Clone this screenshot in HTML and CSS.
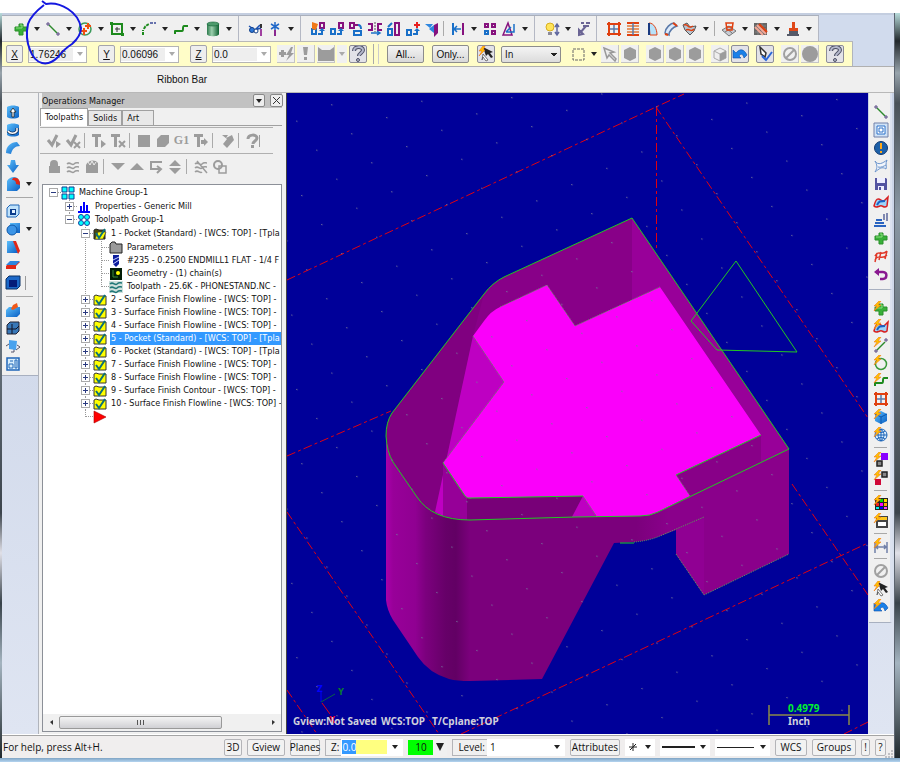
FILE: index.html
```
<!DOCTYPE html>
<html lang="en">
  <head>
    <meta charset="UTF-8" />
    <meta name="viewport" content="width=device-width, initial-scale=1.0" />
    <title>Operations Manager</title>
    <link rel="stylesheet" href="styles.css">
  </head>
  <body>
    <!-- Shared icons -->
    <svg class="sprite" aria-hidden="true">
      <defs>
        <linearGradient id="gBlue" x1="0" y1="0" x2="1" y2="1">
          <stop offset="0" stop-color="#5cc0fc" />
          <stop offset="1" stop-color="#0a5fc4" />
        </linearGradient>
        <linearGradient id="gGreen" x1="0" y1="0" x2="1" y2="0">
          <stop offset="0" stop-color="#2c7a4c" />
          <stop offset="0.4" stop-color="#9ccfae" />
          <stop offset="1" stop-color="#0c6030" />
        </linearGradient>
      </defs>
      <symbol id="plus" viewBox="0 0 16 16">
        <path d="M6 3h4v3h4v4h-4v4H6v-4H2V6h4z" fill="#38b038" stroke="#2a8f2a" />
        <path d="M7 4h2v3H3" fill="none" stroke="#8be07c" />
      </symbol>
      <symbol id="line" viewBox="0 0 16 16">
        <path d="M4 4l8 8" stroke="#2d8a2d" stroke-width="1.5" />
        <path d="M1 3h4M3 1v4M11 13h4M13 11v4" stroke="#5a4a86" />
      </symbol>
      <symbol id="bolt" viewBox="0 0 16 16">
        <path d="M6 0L1 5h3L1 10l7-6H5l3-4z" fill="#ffc400" stroke="#f07818" stroke-width=".6" />
      </symbol>
      <symbol id="spline" viewBox="0 0 16 16">
        <path d="M2 13v-3h7c2 0 0-5 2-5h4" fill="none" stroke="#1d8a1d" stroke-width="2" stroke-linejoin="round" />
      </symbol>
      <symbol id="surface" viewBox="0 0 16 16">
        <path d="M1 12c2-8 4-8 7-6s4 0 7-3l-1 9c-3 3-4-1-7 0s-4 2-6 0z" fill="#9fd4f8" stroke="#d82020" stroke-width="1.5" />
        <path d="M4 11c2-4 3-4 8-4" fill="none" stroke="#1764c8" stroke-width="2" />
      </symbol>
      <symbol id="net" viewBox="0 0 16 16">
        <path d="M3 1v14M13 1v14M1 3h14M1 13h14" fill="none" stroke="#e04010" stroke-width="2" />
        <path d="M8 4v8M4 8h8" stroke="#5878a8" stroke-width="1.5" />
      </symbol>
      <symbol id="undo" viewBox="0 0 16 16">
        <path d="M1 12V4l3 3c4-5 8-4 11 2l-3 3c-1-4-3-5-5-2l2 2z" fill="#1a80e8" stroke="#0b4fa8" stroke-width=".6" />
      </symbol>
      <symbol id="hex" viewBox="0 0 16 16">
        <path d="M8 1l6 3v8l-6 3-6-3V4z" fill="#9c9c9c" />
      </symbol>
      <symbol id="ban" viewBox="0 0 16 16">
        <circle cx="8" cy="8" r="6" fill="none" stroke="#a0a0a0" stroke-width="2" />
        <path d="M4 12l8-8" stroke="#a0a0a0" stroke-width="2" />
      </symbol>
      <symbol id="help" viewBox="0 0 16 16">
        <path d="M4 5c0-5 9-5 9-1 0 3-4 3-4 6" fill="none" stroke="#4d5064" stroke-width="4" />
        <path d="M4 5c0-5 9-5 9-1 0 3-4 3-4 6" fill="none" stroke="#b4b8cc" stroke-width="2" />
        <circle cx="8" cy="14" r="1.5" fill="#b4b8cc" stroke="#4d5064" />
      </symbol>
      <symbol id="pick" viewBox="0 0 16 16">
        <path d="M5 1l10 5-3 1 3 4-2 1-3-4-2 2z" fill="#222" />
        <path d="M5 8l5 6-2 1-3-4-1 3z" fill="#fff" stroke="#555" stroke-width=".8" />
        <path d="M5 0L1 5h3L1 10l6-6H5l2-4z" fill="#ffc400" stroke="#f07818" stroke-width=".6" />
      </symbol>
      <symbol id="copyboxes" viewBox="0 0 16 16">
        <path d="M10 2h4v5h-4z" fill="none" stroke="#86127e" stroke-width="2" />
        <path d="M2 8h4v5H2z" fill="none" stroke="#1a70c8" stroke-width="2" />
        <path d="M8 13h4v-3" fill="none" stroke="#1a70c8" stroke-width="2" />
        <path d="M9 10l3-3 3 3z" fill="#1a70c8" />
      </symbol>
      <symbol id="folder" viewBox="0 0 14 14">
        <path d="M1 3l2-1 3 1h7v9H1z" fill="#ff0" stroke="#333" />
        <path d="M3 7l3 4 6-9" fill="none" stroke="#0c7078" stroke-width="2" />
      </symbol>
    </svg>

    <div class="frame">
      <div class="app">
        <header class="dock-top">
          <div class="toolbar main-tools">
            <div class="group">
              <button class="tool" aria-label="Create point"><svg class="icon"><use href="#plus" /></svg></button><button class="drop" aria-label="Point menu"></button>
              <button class="tool" aria-label="Create line"><svg class="icon"><use href="#line" /></svg></button><button class="drop" aria-label="Line menu"></button>
              <button class="tool" aria-label="Create arc"><svg class="icon"><circle cx="8" cy="8" r="6" fill="none" stroke="#3b9a5b" stroke-width="1.5" /><path d="M7 7v7M3 10h7M11 2v6M8 5h6" stroke="#f05010" stroke-width="2" /></svg></button><button class="drop" aria-label="Arc menu"></button>
              <button class="tool" aria-label="Rectangle"><svg class="icon"><path d="M3 3h10v10H3z" fill="none" stroke="#1d8a1d" stroke-width="2" /><path d="M6 8h5M8 6v5" stroke="#333" /><path d="M1 1h3v3H1zM12 12h3v3h-3z" fill="#1d8a1d" /></svg></button><button class="drop" aria-label="Rectangle menu"></button>
              <button class="tool" aria-label="Fillet"><svg class="icon"><path d="M2 14V9M3 8c1-3 3-4 5-5" fill="none" stroke="#1d8a1d" stroke-width="2" stroke-dasharray="3 1" /><path d="M9 2h6" stroke="#3a4896" stroke-width="1.5" stroke-dasharray="3 1" /></svg></button><button class="drop" aria-label="Fillet menu"></button>
              <button class="tool" aria-label="Spline"><svg class="icon"><use href="#spline" /></svg></button><button class="drop" aria-label="Spline menu"></button>
              <button class="tool" aria-label="Cylinder"><svg class="icon"><path d="M2 3v10c0 3 12 3 12 0V3z" fill="url(#gGreen)" /><ellipse cx="8" cy="3" rx="6" ry="2" fill="#4d9a6c" stroke="#0c6030" stroke-width=".6" /></svg></button><button class="drop" aria-label="Primitives menu"></button>
            </div>
            <div class="group">
              <button class="tool" aria-label="Trim"><svg class="icon"><path d="M1 5l6 4 5-5M7 9l6-2" fill="none" stroke="#1a50b0" stroke-width="1.5" /><circle cx="4" cy="9" r="2.5" fill="#2d78d8" stroke="#123f88" /><circle cx="8" cy="10" r="2" fill="#fff" stroke="#123f88" /><path d="M13 3v4" stroke="#333" stroke-width="2" /><path d="M13 8v7" stroke="#a040a0" stroke-width="2" /></svg></button>
              <button class="tool" aria-label="Break"><svg class="icon"><path d="M8 1v8M4 3l8 5M12 3L4 8" stroke="#2068c8" stroke-width="1.5" /><path d="M8 9v6" stroke="#8a2890" stroke-width="2" /></svg></button><button class="drop" aria-label="Trim menu"></button>
            </div>
            <div class="group">
              <button class="tool" aria-label="Dynamic transform"><svg class="icon"><use href="#copyboxes" /><path d="M2 1l6 2-2 6-4-1z" fill="#f07818" /></svg></button>
              <button class="tool" aria-label="Translate"><svg class="icon"><use href="#copyboxes" /></svg></button>
              <button class="tool" aria-label="Translate 3D"><svg class="icon"><path d="M2 2h4v5H2zM6 4h4" fill="none" stroke="#86127e" stroke-width="2" /><path d="M6 10h7v4H6zM10 4c3 0 3 2 3 4" fill="none" stroke="#1a70c8" stroke-width="2" /></svg></button>
              <button class="tool" aria-label="Offset"><svg class="icon"><path d="M1 3h4v6H1M15 3h-4v6h4" fill="none" stroke="#86127e" stroke-width="2" /><path d="M8 1v10" stroke="#555" stroke-dasharray="2 1" /><path d="M4 12h8M10 10l3 2-3 2" fill="none" stroke="#1a70c8" stroke-width="1.5" /></svg></button>
              <button class="tool" aria-label="Scale"><svg class="icon"><path d="M2 8h4v6H2zM2 6l4-4" fill="none" stroke="#1a70c8" stroke-width="2" /><path d="M9 2h4v12H9z" fill="none" stroke="#86127e" stroke-width="2" /></svg></button>
              <button class="tool" aria-label="Move to origin"><svg class="icon"><path d="M2 9h4v5H2zM8 13h4v-4" fill="none" stroke="#1a70c8" stroke-width="2" /><path d="M9 10l3-3 3 3z" fill="#1a70c8" /><path d="M12 1v6M9 4h6" stroke="#e82020" stroke-width="2" /></svg></button>
              <button class="tool" aria-label="Project"><svg class="icon"><path d="M1 3h8l-3 4zM5 8l5-4v8z" fill="#2d86e0" /><path d="M10 4l4-2v10l-4 4z" fill="#86127e" /></svg></button>
              <span class="sep"></span>
              <button class="tool" aria-label="Mirror"><svg class="icon"><path d="M3 2v12" stroke="#1a70c8" stroke-width="2" /><path d="M13 2v12" stroke="#86127e" stroke-width="2" /><path d="M4 8h7M7 5l-3 3 3 3" fill="none" stroke="#1a70c8" stroke-width="1.5" /></svg></button><button class="drop" aria-label="Mirror menu"></button>
              <button class="tool" aria-label="Array"><svg class="icon"><path d="M3 3h3v3H3zM10 3h3v3h-3zM10 10h3v3h-3z" fill="none" stroke="#86127e" stroke-width="2" /><path d="M3 10h3v3H3z" fill="none" stroke="#1a70c8" stroke-width="2" /></svg></button>
              <button class="tool" aria-label="Drag"><svg class="icon"><path d="M2 14L7 2l4 12z" fill="none" stroke="#86127e" stroke-width="1.5" /><path d="M5 11h8V3M5 11l5-5" fill="none" stroke="#1a70c8" stroke-width="1.5" /></svg></button><button class="drop" aria-label="Drag menu"></button>
            </div>
            <div class="group">
              <button class="tool" aria-label="Analyze"><svg class="icon"><circle cx="6" cy="6" r="4" fill="#ffe45a" stroke="#d8b020" /><path d="M4 11h4v3H4z" fill="#8a8a9a" /><path d="M13 4v9M11 6l2-3 2 3M11 11l2 3 2-3" fill="none" stroke="#6068a0" stroke-width="1.5" /></svg></button><button class="drop" aria-label="Analyze menu"></button>
              <button class="tool" aria-label="Dimension"><svg class="icon"><path d="M3 14V9l4 4zM4 12l6-7M7 5h6M5 2h3M10 2h4" fill="none" stroke="#6a6494" stroke-width="2" /></svg></button>
            </div>
            <div class="group">
              <button class="tool" aria-label="Net surface"><svg class="icon"><use href="#net" /></svg></button>
              <button class="tool" aria-label="Ruled surface"><svg class="icon"><path d="M2 2h12M2 14h12" stroke="#e04010" stroke-width="2" /><path d="M2 5h12M2 8h12M2 11h12" stroke="#e07838" stroke-width="1.5" /><path d="M8 2v12" stroke="#5878a8" stroke-width="1.5" /></svg></button>
              <button class="tool" aria-label="Revolved surface"><svg class="icon"><path d="M5 2c5 0 8 6 8 12H6z" fill="#b8e2fa" stroke="#e04010" /><path d="M5 2v12" stroke="#1a3a80" stroke-width="2" /></svg></button>
              <button class="tool" aria-label="Swept surface"><svg class="icon"><path d="M2 12c0-5 6-10 9-10l3 3c-4 1-8 5-8 9z" fill="#dceafa" stroke="#5878a8" stroke-width="1.5" /><path d="M2 13l3 1M10 2l4 3" stroke="#e04010" stroke-width="2" /></svg></button>
              <button class="tool" aria-label="Trim surface"><svg class="icon"><path d="M1 4l4-2 3 4 6-1-2 5-4 4-5-5z" fill="#b8c4d0" stroke="#555" /><path d="M2 4c5-2 3 5 9 1M4 9c4-2 5 3 8-1" fill="none" stroke="#e04010" stroke-width="1.5" /></svg></button><button class="drop" aria-label="Surface menu"></button>
              <span class="sep"></span>
              <button class="tool" aria-label="Curve on surface"><svg class="icon"><path d="M1 9l7-4 7 5-7 5z" fill="#c8ccd4" stroke="#777" /><path d="M4 11l7-4M5 7l6 5" stroke="#777" /><path d="M5 2h7l-1 7H6zM6 6h5" fill="none" stroke="#e04010" stroke-width="1.5" /></svg></button><button class="drop" aria-label="Curve menu"></button>
              <button class="tool" aria-label="Toolpath surface"><svg class="icon"><path d="M1 2h13v12H1z" fill="#666" /><path d="M2 5h11M2 8h11M2 11h11M5 2v12M9 2v12" stroke="#999" stroke-width=".6" /><path d="M4 4l9 9M2 6l8 8" stroke="#f4a898" stroke-width="2" /><path d="M6 3l8 8" stroke="#e04010" stroke-width="2" /></svg></button><button class="drop" aria-label="Toolpath menu"></button>
              <button class="tool" aria-label="Machine"><svg class="icon"><path d="M7 1h3v6h3v3H4V7h3z" fill="#e04818" /><path d="M4 10h9v3H4zM2 13h12v2H2z" fill="#555a68" /></svg></button><button class="drop" aria-label="Machine menu"></button>
            </div>
          </div>

          <div class="toolbar ribbon">
            <button class="axis"><u>X</u></button>
            <div class="combo"><input type="text" value="1.76246" aria-label="X" /><button class="drop off" aria-label="X history"></button></div>
            <button class="axis"><u>Y</u></button>
            <div class="combo"><input type="text" value="0.06096" aria-label="Y" /><button class="drop off" aria-label="Y history"></button></div>
            <button class="axis"><u>Z</u></button>
            <div class="combo"><input type="text" value="0.0" aria-label="Z" /><button class="drop off" aria-label="Z history"></button></div>
            <div class="ribbon-icons">
              <button class="tool flat" aria-label="Fast point"><svg class="icon"><path d="M1 6h7v3H1zM3 4h3v7H3zM13 1L8 9h3l-3 6 8-8h-3l2-6z" fill="#9c9c9c" /></svg></button>
              <button class="tool flat" aria-label="AutoCursor"><svg class="icon"><path d="M5 1h5L9 9H6zM6 11h3v3H6z" fill="#9c9c9c" /></svg></button>
              <button class="tool flat" aria-label="Override"><svg class="icon"><path d="M0 1l4 3h8l4-3v14H0z" fill="#9c9c9c" /></svg></button>
              <button class="drop off" aria-label="Override menu"></button>
              <button class="tool raised" aria-label="Cursor help"><svg class="icon"><use href="#help" /></svg></button>
            </div>
            <span class="divide"></span>
            <button class="push">All...</button>
            <button class="push">Only...</button>
            <button class="tool raised" aria-label="Quick pick"><svg class="icon"><use href="#pick" /></svg></button>
            <select class="pick-mode" aria-label="Selection mode"><option>In</option><option>Out</option></select>
            <div class="select-icons">
              <button class="tool" aria-label="Window"><svg class="icon"><path d="M3 3h11v11H3z" fill="none" stroke="#666" stroke-dasharray="3 1" /></svg></button><button class="drop" aria-label="Window menu"></button>
              <button class="tool flat" aria-label="Select"><svg class="icon"><path d="M2 2l10 4-4 1 6 6-1 2-6-6-2 3z" fill="#eee" stroke="#999" stroke-width="1.5" /></svg></button>
              <button class="tool flat" aria-label="Solid select"><svg class="icon"><use href="#hex" /></svg></button>
              <span class="space"></span>
              <button class="tool flat" aria-label="Body select"><svg class="icon"><use href="#hex" /></svg></button>
              <button class="tool flat" aria-label="Face select"><svg class="icon"><use href="#hex" /></svg></button>
              <button class="tool flat" aria-label="Edge select"><svg class="icon"><use href="#hex" /></svg></button>
              <span class="space"></span>
              <button class="tool flat" aria-label="From back"><svg class="icon"><path d="M2 5l6-3 6 3v7l-6 3-6-3zM8 8v7M2 5l6 3 6-3" fill="#eee" stroke="#aaa" /><path d="M8 8l6-3v7l-6 3z" fill="#9c9c9c" /></svg></button>
              <button class="tool raised" aria-label="Select last"><svg class="icon"><use href="#undo" /></svg></button>
              <span class="space"></span>
              <button class="tool raised" aria-label="Validate"><svg class="icon"><path d="M3 1l6 6-1 4-4-3z" fill="#fff" stroke="#333" stroke-width="1.5" /><path d="M5 10l4 4 6-8" fill="none" stroke="#2a68d8" stroke-width="2" /></svg></button>
              <span class="space"></span>
              <button class="tool flat" aria-label="Unselect"><svg class="icon"><use href="#ban" /></svg></button>
              <button class="tool flat" aria-label="End selection"><svg class="icon"><circle cx="8" cy="8" r="8" fill="#9c9c9c" /></svg></button>
              <span class="space"></span>
              <button class="tool raised" aria-label="Selection help"><svg class="icon"><use href="#help" /></svg></button>
            </div>
          </div>
          <div class="ribbon-bar">Ribbon Bar</div>
        </header>

        <main class="work">
          <nav class="dock dock-left">
            <div class="strip">
              <div class="cell"><button class="tool" aria-label="Extrude"><svg class="icon"><path d="M2 3c3-2 9-2 12 0v10c-3 2-9 2-12 0z" fill="url(#gBlue)" /><path d="M7 13V8H5l3-4 3 4H9v5z" fill="#fff" stroke="#222" stroke-width=".8" /></svg></button></div>
              <div class="cell"><button class="tool" aria-label="Revolve"><svg class="icon"><path d="M2 3c3-2 9-2 12 0v10c-3 2-9 2-12 0z" fill="url(#gBlue)" /><path d="M3 9c2 3 7 3 9 0V6" fill="none" stroke="#124" stroke-width="3" /><path d="M3 9c2 3 7 3 9 0V6" fill="none" stroke="#fff" stroke-width="1.5" /></svg></button></div>
              <div class="cell"><button class="tool" aria-label="Sweep"><svg class="icon"><path d="M1 13C1 6 6 2 12 2l3 4c-5 0-8 3-9 8z" fill="url(#gBlue)" /></svg></button></div>
              <div class="cell"><button class="tool" aria-label="Loft"><svg class="icon"><path d="M6 2h4l1 5h3l-6 8-6-8h3z" fill="url(#gBlue)" /></svg></button></div>
              <div class="cell"><button class="tool" aria-label="Solid fillet"><svg class="icon"><path d="M2 5c2-4 8-5 10-3l3 4v6l-3 3H2z" fill="url(#gBlue)" /><path d="M8 2c6-1 7 3 7 7l-4-1c0-3-1-4-4-4z" fill="#e02818" /></svg></button><button class="drop" aria-label="Solid fillet menu"></button></div>
              <hr />
              <div class="cell"><button class="tool" aria-label="Shell"><svg class="icon"><path d="M2 5l3-3h9v9l-3 3H2z" fill="#bfe2fb" stroke="#1f66b8" /><path d="M5 6h6v6H5z" fill="#0b3c8c" /><path d="M7 7h3v3H7z" fill="#e6f4ff" /></svg></button></div>
              <div class="cell"><button class="tool" aria-label="Boolean"><svg class="icon"><path d="M5 2h10v10H5z" fill="url(#gBlue)" /><circle cx="7" cy="9" r="5" fill="#3b94e6" stroke="#0b56a8" /></svg></button><button class="drop" aria-label="Boolean menu"></button></div>
              <div class="cell"><button class="tool" aria-label="Draft"><svg class="icon"><path d="M2 2h7l4 12H2z" fill="url(#gBlue)" /><path d="M8 2h3l4 10-2 3z" fill="#e02818" /></svg></button></div>
              <div class="cell"><button class="tool" aria-label="Trim solid"><svg class="icon"><path d="M1 9l4-4h10l-4 4v3H1z" fill="#e02818" /><path d="M1 8l4-4h10l-4 4z" fill="#2d86e0" /></svg></button></div>
              <div class="cell"><button class="tool" aria-label="Thicken"><svg class="icon"><path d="M1 4l3-3h11v10l-3 3H1z" fill="#1b68c8" stroke="#0a3064" /><path d="M4 5h8v7H4z" fill="#041c78" /></svg></button><span class="edge"></span></div>
              <hr />
              <div class="cell"><button class="tool" aria-label="Remove faces"><svg class="icon"><path d="M1 8l3-3h11v7l-3 3H1z" fill="url(#gBlue)" /><path d="M6 7l2-4 4-2 1 4-5 3z" fill="#f05818" /></svg></button></div>
              <div class="cell"><button class="tool" aria-label="Split"><svg class="icon"><path d="M2 5l3-3h9v9l-3 3H2z" fill="#3878b8" stroke="#223" /><path d="M2 9h9l3-3M7 4v10" stroke="#112" fill="none" /></svg></button></div>
              <div class="cell"><button class="tool" aria-label="Flatten"><svg class="icon"><path d="M1 8l3-2M11 12l4-3-3-2M6 14h3v-3" fill="#eef" stroke="#556" /><path d="M4 2l8 1-1 9-7-1z" fill="#4aa2ee" /></svg></button></div>
              <div class="cell"><button class="tool" aria-label="Layout"><svg class="icon"><path d="M2 2h12v12H2z" fill="#d8eefc" stroke="#1f66b8" stroke-width="1.5" /><path d="M4 8h4v4H4zM10 4h2v8h-2zM5 5h3" fill="none" stroke="#1f66b8" /></svg></button></div>
            </div>
          </nav>

          <aside class="manager">
            <div class="manager-title">
              <span>Operations Manager</span>
              <button class="drop" aria-label="Panel menu"></button>
              <button class="close" aria-label="Close"><svg width="9" height="9"><path d="M1 1l7 7M8 1L1 8" stroke="#333" /></svg></button>
            </div>
            <div class="tabs" role="tablist">
              <button class="tab active" role="tab">Toolpaths</button>
              <button class="tab" role="tab">Solids</button>
              <button class="tab last" role="tab">Art</button>
            </div>
            <div class="op-tools">
              <button class="tool" aria-label="Select all"><svg class="icon"><path d="M2 7l4 5 5-10" fill="none" stroke="#9c9c9c" stroke-width="3" /><path d="M10 8l5 3-5 4z" fill="#9c9c9c" /></svg></button>
              <button class="tool" aria-label="Select dirty"><svg class="icon"><path d="M2 7l4 5 5-10" fill="none" stroke="#9c9c9c" stroke-width="3" /><path d="M9 9l6 6M15 9l-6 6" stroke="#9c9c9c" stroke-width="2" /></svg></button>
              <span class="sep"></span>
              <button class="tool" aria-label="Regenerate"><svg class="icon"><path d="M1 1h9v3H7v10H4V4H1zM10 7l5 4-5 4z" fill="#9c9c9c" /></svg></button>
              <button class="tool" aria-label="Regenerate dirty"><svg class="icon"><path d="M1 1h9v3H7v10H4V4H1z" fill="#9c9c9c" /><path d="M9 8l6 6M15 8l-6 6" stroke="#9c9c9c" stroke-width="2" /></svg></button>
              <span class="sep"></span>
              <button class="tool" aria-label="Backplot"><svg class="icon"><path d="M2 2h12v12H2z" fill="#9c9c9c" /></svg></button>
              <button class="tool" aria-label="Verify"><svg class="icon"><path d="M2 6l4-4h8v8l-4 4H2z" fill="#9c9c9c" /></svg></button>
              <button class="tool g1">G1</button>
              <button class="tool" aria-label="High feed"><svg class="icon"><path d="M1 1h9v3H7v10H4V4H1zM8 7h3V5l4 4-4 4v-2H8z" fill="#9c9c9c" /></svg></button>
              <span class="sep"></span>
              <button class="tool" aria-label="Delete all"><svg class="icon"><path d="M3 2h6L7 5l6-3 2 5-7 8-4-4 4-5z" fill="#9c9c9c" /></svg></button>
              <span class="sep"></span>
              <button class="tool" aria-label="Help"><svg class="icon"><path d="M3 6c0-5 9-5 9-1 0 3-4 3-4 6" fill="none" stroke="#9c9c9c" stroke-width="3" /><path d="M6 12h3v3H6zM14 2h1v12h-1z" fill="#9c9c9c" /></svg></button>
            </div>
            <div class="op-tools">
              <button class="tool" aria-label="Lock"><svg class="icon"><path d="M3 7h11v7H3z" fill="#9c9c9c" /><path d="M5 8V5c0-4 6-4 6 0v3" fill="#9c9c9c" stroke="#9c9c9c" stroke-width="2" /></svg></button>
              <button class="tool" aria-label="Toggle toolpath"><svg class="icon"><path d="M2 5c3-3 5 2 7 0s3-1 5-1M2 9c3-3 5 2 7 0s3-1 5-1M2 13c3-3 5 2 7 0s3-1 5-1" fill="none" stroke="#9c9c9c" stroke-width="1.5" /></svg></button>
              <button class="tool" aria-label="Toggle posting"><svg class="icon"><path d="M2 6c2-5 9-6 12-2v10H2z" fill="#9c9c9c" /><path d="M4 3l2 3 2-4 2 4 2-3" fill="none" stroke="#eee" /></svg></button>
              <span class="sep"></span>
              <button class="tool" aria-label="Move down"><svg class="icon"><path d="M1 4h14l-7 7z" fill="#9c9c9c" /></svg></button>
              <button class="tool" aria-label="Move up"><svg class="icon"><path d="M1 11h14L8 4z" fill="#9c9c9c" /></svg></button>
              <button class="tool" aria-label="Insert arrow"><svg class="icon"><path d="M14 3H3v7h9M9 7l4 3-4 4" fill="none" stroke="#9c9c9c" stroke-width="2" /></svg></button>
              <button class="tool" aria-label="Scroll"><svg class="icon"><path d="M2 7l6-6 6 6zM2 9h12l-6 6z" fill="#9c9c9c" /></svg></button>
              <span class="sep"></span>
              <button class="tool" aria-label="Display selected"><svg class="icon"><path d="M2 5c3-3 5 2 7 0s3-1 5-1M2 9c3-3 5 2 7 0s3-1 5-1M2 13c3-3 5 2 7 0M4 2l10 12" fill="none" stroke="#9c9c9c" stroke-width="1.5" /></svg></button>
              <button class="tool" aria-label="Display geometry"><svg class="icon"><circle cx="6" cy="6" r="4" fill="none" stroke="#9c9c9c" stroke-width="2" /><path d="M7 7h7v7H7z" fill="none" stroke="#9c9c9c" stroke-width="1.5" /></svg></button>
            </div>

            <div class="tree-box">
              <ul class="tree">
                <li>
                  <div class="row"><button class="toggle minus" aria-label="Collapse"></button><svg class="node"><path d="M1 1h5v5H1zM8 1h5v5H8zM1 8h5v5H1zM8 8h5v5H8z" fill="#0ff" stroke="#123a90" /></svg><span>Machine Group-1</span></div>
                  <ul>
                    <li><div class="row"><button class="toggle" aria-label="Expand"></button><svg class="node"><path d="M1 12h12M4 12V6M7 12V2M10 12V5" stroke="#00f" stroke-width="2" /></svg><span>Properties - Generic Mill</span></div></li>
                    <li>
                      <div class="row"><button class="toggle minus" aria-label="Collapse"></button><svg class="node"><g fill="#0ff" stroke="#1840a0"><circle cx="4" cy="4" r="2.5" /><circle cx="10" cy="4" r="2.5" /><circle cx="4" cy="10" r="2.5" /><circle cx="10" cy="10" r="2.5" /></g></svg><span>Toolpath Group-1</span></div>
                      <ul>
                        <li>
                          <div class="row"><button class="toggle minus" aria-label="Collapse"></button><svg class="node"><path d="M1 3l2-1 3 1h6v9H1z" fill="#4a4a10" stroke="#222" /><path d="M2 12l3-7h8l-3 7z" fill="#ff0" stroke="#333" stroke-width=".6" /><path d="M3 6l3 5 6-9" fill="none" stroke="#0c7078" stroke-width="2" /></svg><span>1 - Pocket (Standard) - [WCS: TOP] - [Tpla</span></div>
                          <ul>
                            <li><div class="row leaf"><svg class="node"><path d="M1 3l2-2h3l1 2h6v9H1z" fill="#9a9a9a" stroke="#222" /></svg><span>Parameters</span></div></li>
                            <li><div class="row leaf"><svg class="node"><path d="M4 1h6v9l-3 3-3-3z" fill="#0c1c9c" /><path d="M4 6l6-3M4 10l6-4" stroke="#c8d0ff" /></svg><span>#235 - 0.2500 ENDMILL1 FLAT - 1/4 F</span></div></li>
                            <li><div class="row leaf"><svg class="node"><path d="M1 1h12v12H1z" fill="#021c06" /><path d="M4 3v7h5" stroke="#3a8a3a" fill="none" /><circle cx="9" cy="6" r="2" fill="#ff0" /></svg><span>Geometry - (1) chain(s)</span></div></li>
                            <li><div class="row leaf"><svg class="node"><path d="M0 1h14v12H0z" fill="#cfe0dc" /><path d="M1 4c3-3 5 2 7 0s3-1 5-1M1 8c3-3 5 2 7 0s3-1 5-1M1 12c3-3 5 2 7 0s3-1 5-1" fill="none" stroke="#207878" stroke-width="1.5" /></svg><span>Toolpath - 25.6K - PHONESTAND.NC -</span></div></li>
                          </ul>
                        </li>
                        <li><div class="row"><button class="toggle" aria-label="Expand"></button><svg class="node"><use href="#folder" /></svg><span>2 - Surface Finish Flowline - [WCS: TOP] -</span></div></li>
                        <li><div class="row"><button class="toggle" aria-label="Expand"></button><svg class="node"><use href="#folder" /></svg><span>3 - Surface Finish Flowline - [WCS: TOP] -</span></div></li>
                        <li><div class="row"><button class="toggle" aria-label="Expand"></button><svg class="node"><use href="#folder" /></svg><span>4 - Surface Finish Flowline - [WCS: TOP] -</span></div></li>
                        <li><div class="row selected"><button class="toggle" aria-label="Expand"></button><svg class="node"><use href="#folder" /></svg><span>5 - Pocket (Standard) - [WCS: TOP] - [Tpla</span></div></li>
                        <li><div class="row"><button class="toggle" aria-label="Expand"></button><svg class="node"><use href="#folder" /></svg><span>6 - Pocket (Standard) - [WCS: TOP] - [Tpla</span></div></li>
                        <li><div class="row"><button class="toggle" aria-label="Expand"></button><svg class="node"><use href="#folder" /></svg><span>7 - Surface Finish Flowline - [WCS: TOP] -</span></div></li>
                        <li><div class="row"><button class="toggle" aria-label="Expand"></button><svg class="node"><use href="#folder" /></svg><span>8 - Surface Finish Flowline - [WCS: TOP] -</span></div></li>
                        <li><div class="row"><button class="toggle" aria-label="Expand"></button><svg class="node"><use href="#folder" /></svg><span>9 - Surface Finish Contour - [WCS: TOP] -</span></div></li>
                        <li><div class="row"><button class="toggle" aria-label="Expand"></button><svg class="node"><use href="#folder" /></svg><span>10 - Surface Finish Flowline - [WCS: TOP] -</span></div></li>
                        <li><div class="row"><i class="stub"></i><svg class="node"><path d="M1 1l12 6-12 6z" fill="#f00" stroke="#a00" stroke-width=".6" /></svg></div></li>
                      </ul>
                    </li>
                  </ul>
                </li>
              </ul>
              <div class="scrollbar">
                <button class="arrow" aria-label="Scroll left"><svg width="5" height="7"><path d="M4 1v5L1 3z" fill="#333" /></svg></button>
                <div class="track"><div class="thumb"><svg width="9" height="5"><path d="M1 0h1v5H1zM4 0h1v5H4zM7 0h1v5H7z" fill="#555" /></svg></div></div>
                <button class="arrow" aria-label="Scroll right"><svg width="5" height="7"><path d="M1 1v5l3-3z" fill="#333" /></svg></button>
              </div>
            </div>
          </aside>

          <section class="viewport">
            <svg viewBox="287 93 581 641" preserveAspectRatio="xMidYMid slice">
              <defs>
                <linearGradient id="body" gradientUnits="userSpaceOnUse" x1="385" y1="0" x2="790" y2="0">
                  <stop offset="0" stop-color="#ac00ae" />
                  <stop offset=".02" stop-color="#980099" />
                  <stop offset=".075" stop-color="#900092" />
                  <stop offset=".1" stop-color="#7c007e" />
                  <stop offset=".15" stop-color="#660068" />
                  <stop offset=".175" stop-color="#620064" />
                  <stop offset=".21" stop-color="#7b007c" />
                  <stop offset=".62" stop-color="#7b007c" />
                  <stop offset=".7" stop-color="#8a008b" />
                  <stop offset="1" stop-color="#8a008b" />
                </linearGradient>
                <pattern id="grid" width="35" height="29" patternUnits="userSpaceOnUse" patternTransform="matrix(1 -0.466 0.69 1 501 217)">
                  <rect width="1" height="1" fill="#74749c" />
                </pattern>
              </defs>
              <rect x="287" y="93" width="581" height="641" fill="#000099" />

              <!-- Stock boundary -->
              <g fill="none" stroke="#e00010" stroke-dasharray="9 3 3 3">
                <path d="M287 280L656 107L684 94M656 107L868 418M656.5 107V250M287 456L391 411" />
                <path d="M287 512L439 734M287 690L317 734M461 734L868 543M792 484L868 595M844 734L868 722" />
              </g>

              <!-- Part -->
              <path fill="url(#body)" d="M386 436V600Q387 610 393 620L418 657Q429 673 449 679Q457 681 470 681L542 679L614 543L634 542Q648 541 660 536L676 530V554L704 595L789 554V449L632 300Z" />
              <path fill="#900093" d="M676 530L704 517V595L676 554Z" />
              <path fill="#880088" d="M632 218L504 277Q492 283 484 294L392 413Q386 422 386 436Q387 452 393 462L417 497Q432 520 470 520L575 517L640 516Q650 516 658 512L789 449Z" />
              <path fill="#800080" d="M473 336L484 294L392 413Q386 422 386 436Q387 452 393 462L417 497Q424 508 436 513Z" />
              <path fill="#980099" d="M632 218L789 449L761 462V435L660 287L632 300Z" />
              <path fill="#be00c2" d="M473 336L504 382L443 463V516L435 512Z" />
              <path fill="#960098" d="M443 463L467 498V520L443 516Z" />
              <path fill="#780078" d="M467 498L583 496L572 517L467 520Z" />
              <path fill="#be00c2" d="M583 496L597 517H572Z" />
              <path fill="#fa00fa" d="M547 285L575 326L660 287L761 435L676 475L690 496L658 512Q650 516 640 516L597 517L583 496L472 498Q467 499 465 496L443 463L504 382L473 336L484 321Q491 311 500 307Z" />

              <g fill="none" stroke="#22c822">
                <path d="M632 218L504 277Q492 283 484 294L392 413Q386 422 386 436Q387 452 393 462L417 497Q432 520 470 520L575 517L640 516Q650 516 658 512L789 449Z" />
                <path d="M443 463L465 496Q467 499 472 498L583 496M676 475L761 435M620 543H634M736 261L797 352L717 350L691 321Z" />
              </g>
              <g fill="none" stroke="#5ca05c" stroke-dasharray="1 1">
                <path d="M500 307L547 285L575 326L660 287M473 336L504 382L443 463M583 496L597 517M676 475L690 496" />
                <path d="M634 542Q648 541 660 536L704 517M676 554L704 595L789 554" />
              </g>
              <rect x="287" y="93" width="581" height="641" fill="url(#grid)" />

              <!-- Axis gnomon -->
              <path d="M321 702V692" stroke="#00f" />
              <path d="M321 702L335 694" stroke="#086048" />
              <path d="M322 703L330 714" stroke="#e00018" />
              <g class="axis-name">
                <text x="317" y="692" fill="#00f">Z</text>
                <text x="338" y="695" fill="#087830">Y</text>
                <text x="329" y="723" fill="#f00018">X</text>
              </g>

              <!-- Scale bar -->
              <path d="M769 705V725M849 705V725M769 715H849" stroke="#8a8a48" fill="none" stroke-width="1.5" />
              <g class="view-text">
                <text x="788" y="712" fill="#00f030">0.4979</text>
                <text x="788" y="725">Inch</text>
                <text x="293" y="725">Gview:Not Saved</text>
                <text x="381" y="725">WCS:TOP</text>
                <text x="432" y="725">T/Cplane:TOP</text>
              </g>
            </svg>
          </section>

          <nav class="dock dock-right">
            <div class="strip">
              <button class="tool" aria-label="Sketch line"><svg class="icon"><use href="#line" /></svg></button>
              <button class="tool" aria-label="Offset contour"><svg class="icon"><path d="M1 1h14v14H1z" fill="#cfe2f6" stroke="#7080a8" /><path d="M4 4h8v8H4zM6 6h4v4H6z" fill="#fff" stroke="#2a70c8" /></svg></button>
              <button class="tool" aria-label="Globe"><svg class="icon"><circle cx="8" cy="8" r="6.5" fill="#1d60a8" stroke="#123a70" /><path d="M7 3h2v6H7zM7 11h2v2H7z" fill="#ffa818" /></svg></button>
              <button class="tool" aria-label="Ribbon surface"><svg class="icon"><path d="M2 3c3 5 8 2 12-1-2 4 0 6-1 9-4-3-7 0-11 3 3-5 2-7 0-11zM5 9c3 1 6-1 8-2" fill="#f2f6fc" stroke="#6a94cc" /></svg></button>
              <button class="tool" aria-label="Save"><svg class="icon"><path d="M2 2h11l1 1v11H2z" fill="#5454a0" /><path d="M4 2h8v5H4zM5 10h6v4H5z" fill="#eef" /><path d="M6 11h2v3H6z" fill="#5454a0" /></svg></button>
              <button class="tool" aria-label="Surface"><svg class="icon"><use href="#surface" /></svg></button>
              <button class="tool" aria-label="Level"><svg class="icon"><path d="M1 14h12M2 11h9M3 8h6" stroke="#2a64c0" stroke-width="2" /><path d="M11 2v6M14 1v8" stroke="#8088b0" stroke-width="2" /></svg></button>
              <button class="tool" aria-label="Point"><svg class="icon"><use href="#plus" /></svg></button>
              <button class="tool" aria-label="Contours"><svg class="icon"><path d="M2 8c4-7 6 1 12-5M2 12c4-7 6 1 12-5M4 5l-2 9M8 4l-2 8M14 3l-2 8" fill="none" stroke="#e03828" stroke-width="1.5" /></svg></button>
              <button class="tool" aria-label="Undo"><svg class="icon"><path d="M3 6h7c5 0 4 7 0 7H7" fill="none" stroke="#8a1890" stroke-width="2.5" /><path d="M1 6l5-4v8z" fill="#8a1890" /></svg></button>
            </div>
            <div class="strip">
              <button class="tool" aria-label="Quick point"><svg class="icon"><use href="#plus" /><use href="#bolt" /></svg></button>
              <button class="tool" aria-label="Quick surface"><svg class="icon"><use href="#surface" /><use href="#bolt" /></svg></button>
              <button class="tool" aria-label="Quick line"><svg class="icon"><path d="M4 13l8-8" stroke="#2d8a2d" stroke-width="1.5" /><path d="M11 3h4M13 1v4M1 14h4M3 12v4" stroke="#5a4a86" /><use href="#bolt" /></svg></button>
              <button class="tool" aria-label="Quick circle"><svg class="icon"><circle cx="8" cy="9" r="5.5" fill="none" stroke="#3b9a3b" stroke-width="1.5" /><use href="#bolt" /></svg></button>
              <button class="tool" aria-label="Quick spline"><svg class="icon"><use href="#spline" /><use href="#bolt" /></svg></button>
              <button class="tool" aria-label="Quick net"><svg class="icon"><use href="#net" /></svg></button>
              <button class="tool" aria-label="Quick solid"><svg class="icon"><path d="M8 2l6 3v7l-6 3-6-3V5z" fill="url(#gBlue)" /><path d="M2 5l6 3v7M8 8l6-3" fill="none" stroke="#0a56b0" /><use href="#bolt" /></svg></button>
              <button class="tool" aria-label="Quick wireframe"><svg class="icon"><circle cx="8" cy="8" r="6" fill="#d8ecfc" stroke="#1f66b8" /><path d="M8 2v12M2 8h12M4 4c3 2 5 2 8 0M4 12c3-2 5-2 8 0M8 2c-4 4-4 8 0 12 4-4 4-8 0-12" fill="none" stroke="#1f66b8" /><use href="#bolt" /></svg></button>
              <hr />
              <button class="tool" aria-label="Color mask"><svg class="icon"><path d="M8 1h7v7H8z" fill="#8a00ff" /><path d="M4 9h5v5H4z" fill="#888" stroke="#222" stroke-width="1.5" /><use href="#bolt" /></svg></button>
              <button class="tool" aria-label="Group mask"><svg class="icon"><path d="M9 2h5v5H9z" fill="#888" stroke="#222" stroke-width="1.5" /><path d="M2 9h6v6H2z" fill="#d00838" /><use href="#bolt" /></svg></button>
              <hr />
              <button class="tool" aria-label="Palette"><svg class="icon"><path d="M2 3h13v12H2z" fill="#222" /><path d="M7 4h3v3H7z" fill="#0d0" /><path d="M11 4h3v3h-3z" fill="#fd0" /><path d="M3 8h3v3H3z" fill="#e22" /><path d="M7 8h3v3H7z" fill="#f0f" /><path d="M11 8h3v3h-3z" fill="#fa0" /><path d="M3 12h3v2H3z" fill="#0ee" /><path d="M7 12h3v2H7z" fill="#00f" /><path d="M11 12h3v2h-3z" fill="#f4f" /><use href="#bolt" /></svg></button>
              <button class="tool" aria-label="Level mask"><svg class="icon"><path d="M3 3h12v12H3z" fill="#444" /><path d="M5 9h8v4H5z" fill="#fff" /><path d="M4 4h10v3H4z" fill="#ffc820" /><use href="#bolt" /></svg></button>
              <hr />
              <button class="tool" aria-label="Dimension mask"><svg class="icon"><path d="M2 4v11M14 4v11M3 9h10M5 7L3 9l2 2M11 7l2 2-2 2" fill="none" stroke="#7080a8" stroke-width="1.5" /><use href="#bolt" /></svg></button>
              <hr />
              <button class="tool" aria-label="Clear"><svg class="icon"><use href="#ban" /></svg></button>
              <button class="tool" aria-label="Pick"><svg class="icon"><use href="#pick" /></svg></button>
              <button class="tool" aria-label="Restore"><svg class="icon"><use href="#undo" /><use href="#bolt" /></svg></button>
            </div>
          </nav>
        </main>

        <footer class="status">
          <span class="help-text">For help, press Alt+H.</span>
          <button class="stat w18">3D</button>
          <button class="stat w38">Gview</button>
          <button class="stat w30">Planes</button>
          <div class="field">
            <label for="depth">Z:</label>
            <input type="text" id="depth" value="0.0" />
            <button class="drop" aria-label="Z depth menu"></button>
          </div>
          <div class="field color">
            <button class="swatch">10</button>
            <button class="drop big" aria-label="Color menu"></button>
          </div>
          <div class="field">
            <label for="level">Level:</label>
            <input type="text" id="level" value="1" />
            <button class="drop" aria-label="Level menu"></button>
          </div>
          <button class="stat w50">Attributes</button>
          <button class="style-pick w30" aria-label="Point style"><svg width="12" height="12"><path d="M2 6h8M6 2v8M3 9l6-6" stroke="#222" /></svg><i class="tri"></i></button>
          <button class="style-pick w50" aria-label="Line style"><span class="stroke thick"></span><i class="tri"></i></button>
          <button class="style-pick w55" aria-label="Line width"><span class="stroke"></span><i class="tri"></i></button>
          <button class="stat w32">WCS</button>
          <button class="stat w44">Groups</button>
          <button class="stat w9">!</button>
          <button class="stat w11">?</button>
          <svg class="grip" width="9" height="9"><path d="M7 1h2v2H7zM4 4h2v2H4zM7 4h2v2H7zM1 7h2v2H1zM4 7h2v2H4zM7 7h2v2H7z" fill="#c0c0c4" /></svg>
        </footer>
      </div>
    </div>
    <div class="glass"></div>

    <!-- Pen mark round the line tool -->
    <svg class="pen" width="90" height="70">
      <path d="M42 1L46 4Q57 2 68 9Q79 16 81 28Q81 36 72 44Q64 49 58 57Q50 65 42 63Q34 61 30 50Q25 38 28 24Q31 15 44 5" />
    </svg>
  </body>
</html>
```
FILE: styles.css
```
* {
  box-sizing: border-box;
}
body {
  margin: 0;
  padding-top: 13px;
  height: 100vh;
  display: flex;
  flex-direction: column;
  overflow: hidden;
  background: #fff;
  color: #111;
  font-family: "DejaVu Sans Condensed", "DejaVu Sans", sans-serif;
  font-size: 9px;
}
button,
input,
select {
  margin: 0;
  padding: 0;
  border: 0;
  background: none;
  color: inherit;
  font: inherit;
}
svg {
  display: block;
  flex: none;
}
.sprite {
  position: absolute;
  width: 0;
  height: 0;
}
.icon {
  width: 16px;
  height: 16px;
}
.frame {
  flex: 1;
  min-height: 0;
  padding: 0 5px 0 2px;
  background: linear-gradient(#b8dcdc, #22282c 28px, #98a4ac 60px, #485058 90px, #8a98a4 200px, #3c444c 500px, #e0e0e8 540px, #38424a 590px, #a4b4c0 650px, #20282c);
}
.app {
  height: 100%;
  display: flex;
  flex-direction: column;
  background: #d1dbed;
  border-right: 1px solid #5c6470;
}

/* Buttons shared by the docks */
.tool {
  width: 19px;
  height: 18px;
  flex: none;
  display: flex;
  align-items: center;
  justify-content: center;
}
.tool:hover {
  background: #dce8f8;
}
.tool.raised {
  width: 18px;
  border: 1px solid #8c8c98;
  border-radius: 2px;
  background: #e2e2e8;
}
.tool.flat {
  width: 18px;
  border-right: 1px solid #c4c4c4;
  border-bottom: 1px solid #c4c4c4;
  background: #f0f0f0;
}
.drop {
  width: 13px;
  height: 18px;
  flex: none;
  display: flex;
  align-items: center;
  justify-content: center;
}
.drop::after,
.tri {
  content: "";
  border: 3px solid transparent;
  border-top: 4px solid #222;
  border-bottom: 0;
}
.drop.off::after {
  border-top-color: #aaa;
}
.drop.big::after {
  border-width: 8px 4px 0;
}
.sep {
  width: 1px;
  height: 15px;
  margin: 0 4px 0 2px;
  background: #aaa;
}

/* Top docks */
.dock-top {
  border-top: 2px solid #c4cee0;
}
.toolbar {
  display: flex;
  align-items: center;
  width: fit-content;
  background: #f0f0f0;
}
.main-tools {
  height: 26px;
  border-top: 1px solid #aab0bc;
}
.group {
  display: flex;
  align-items: center;
  height: 100%;
  padding: 0 3px 0 7px;
  border-right: 1px solid #b4b8c4;
}
.group:first-child {
  padding-left: 9px;
}
.ribbon {
  height: 25px;
  padding: 0 8px 0 4px;
  border-top: 1px solid #b8b8b8;
  border-right: 1px solid #b0b4bc;
  background: #fffdc8;
}
.axis,
.combo input,
.push,
.ribbon-bar {
  font-family: "Liberation Sans", Arial, sans-serif;
  font-size: 10px;
}
.axis {
  width: 17px;
  height: 18px;
  border: 1px solid #a4a4ac;
  border-radius: 2px;
  background: #eee;
}
.combo {
  width: 59px;
  height: 17px;
  margin: 0 11px 0 5px;
  display: flex;
  border: 1px solid #b4b4b4;
  background: #fff;
}
.combo input {
  flex: 1;
  min-width: 0;
  margin: 1px 0;
  padding-left: 1px;
  background: #eee;
}
.combo .drop {
  height: 100%;
}
.ribbon-icons,
.select-icons {
  display: flex;
  align-items: center;
  gap: 2px;
}
.ribbon-icons {
  margin-left: -5px;
}
.ribbon-icons .drop {
  width: 10px;
  background: #f0f0f0;
}
.divide {
  width: 6px;
  height: 20px;
  margin: 0 8px 0 6px;
  border-left: 1px solid #aaa;
  border-right: 1px solid #ccc;
}
.push {
  width: 37px;
  height: 18px;
  margin-right: 8px;
  border: 1px solid #8c8c8c;
  border-radius: 2px;
  background: linear-gradient(#f4f4f4, #d8d8d8);
}
.pick-mode {
  width: 60px;
  height: 17px;
  margin: 0 7px 0 6px;
  padding-left: 3px;
  appearance: none;
  border: 1px solid #8c8c8c;
  border-radius: 2px;
  background:
    linear-gradient(45deg, transparent 50%, #222 50%) 49px 6px / 3px 4px no-repeat,
    linear-gradient(-45deg, transparent 50%, #222 50%) 52px 6px / 3px 4px no-repeat,
    linear-gradient(#f4f4f4, #dcdcdc);
  font-size: 10px;
}
.select-icons .drop {
  width: 10px;
}
.space {
  width: 3px;
}
.ribbon-bar {
  height: 27px;
  padding-left: 155px;
  border-top: 1px solid #b0b0b0;
  border-bottom: 1px solid #b8b8b8;
  background: #efefef;
  line-height: 26px;
}

/* Side docks */
.work {
  flex: 1;
  min-height: 0;
  display: flex;
  border-bottom: 1px solid #fff;
}
.dock {
  flex: none;
  background: linear-gradient(#c8d2e6, #dfe5f2);
}
.dock-left {
  width: 37px;
  border-right: 1px solid #b0b4bc;
}
.dock-right {
  width: 26px;
  padding: 0 2px 0 1px;
}
.strip {
  background: #f0f0f0;
  border-bottom: 1px solid #a8b0c0;
}
.dock-left .strip {
  padding: 10px 2px 2px 1px;
}
.dock-right .strip {
  padding: 10px 0 6px 2px;
  border-right: 2px solid #dce2f0;
}
.cell {
  display: flex;
  align-items: center;
}
.edge {
  width: 1px;
  height: 14px;
  margin-left: 3px;
  background: #999;
}
.strip hr {
  height: 1px;
  margin: 3px;
  border: 0;
  background: #a8a8a8;
}
.dock-left .strip hr {
  margin: 4px 3px;
}

/* Operations manager */
.manager {
  width: 247px;
  flex: none;
  display: flex;
  flex-direction: column;
  padding: 0 4px 2px 3px;
  background: #f0f0f0;
}
.manager-title {
  height: 15px;
  display: flex;
  align-items: center;
  gap: 5px;
  background: #c2c2c2;
}
.manager-title span {
  flex: 1;
}
.manager-title .drop,
.close {
  width: 12px;
  height: 13px;
  border: 1px solid #888;
  border-radius: 2px;
  background: #eee;
}
.close {
  width: 13px;
  margin-right: -1px;
  padding-left: 1px;
}
.tabs {
  height: 18px;
  display: flex;
  align-items: flex-end;
  margin-left: -2px;
  border-bottom: 1px solid #a0a0a0;
}
.tab {
  height: 15px;
  padding: 0 4px;
  border: 1px solid #a0a0a0;
  border-bottom: 0;
  background: #e8e8e8;
  line-height: 14px;
}
.tab.last {
  padding-right: 14px;
}
.tab.active {
  height: 18px;
  margin-bottom: -1px;
  padding-bottom: 2px;
  background: #fff;
}
.op-tools {
  height: 26px;
  margin: 0 9px 0 -2px;
  padding-left: 4px;
  display: flex;
  align-items: center;
  border-top: 1px solid #b0b0b0;
}
.tabs + .op-tools {
  margin-top: 1px;
}
.g1 {
  color: #9c9c9c;
  font-family: "Liberation Serif", serif;
  font-size: 12px;
  font-weight: bold;
}
.tree-box {
  flex: 1;
  min-height: 0;
  margin-top: 5px;
  display: flex;
  flex-direction: column;
  border: 1px solid #8c9098;
  background: #fff;
}
.tree {
  flex: 1;
  margin: 0;
  padding: 1px 0 0 6px;
  overflow: hidden;
}
.tree ul {
  margin: 0;
  padding: 1px 0 0 16px;
}
.tree li {
  list-style: none;
}
.tree li li {
  background: repeating-linear-gradient(#999 0 1px, transparent 1px 2px) 4px 0 / 1px 100% no-repeat;
}
.tree li li:last-child {
  background-size: 1px 7px;
}
.row {
  height: 13px;
  display: flex;
  align-items: center;
  gap: 3px;
  line-height: 13px;
  white-space: nowrap;
  background: repeating-linear-gradient(90deg, #999 0 1px, transparent 1px 2px) 5px 6px / 8px 1px no-repeat;
}
.row.leaf {
  padding-left: 12px;
}
.row span {
  padding-left: 1px;
}
.row.selected span {
  flex: 1;
  background: #3399ff;
  color: #fff;
}
.node {
  width: 14px;
  height: 14px;
}
.stub {
  width: 9px;
}
.toggle {
  width: 9px;
  height: 9px;
  flex: none;
  border: 1px solid #aaa;
  background:
    linear-gradient(#2a3a80, #2a3a80) 1px 3px / 5px 1px no-repeat,
    linear-gradient(#2a3a80, #2a3a80) 3px 1px / 1px 5px no-repeat,
    #fff;
}
.toggle.minus {
  background: linear-gradient(#2a3a80, #2a3a80) 1px 3px / 5px 1px no-repeat, #fff;
}
.scrollbar {
  height: 17px;
  display: flex;
  align-items: center;
  background: #f0f0f0;
}
.arrow {
  width: 16px;
  display: flex;
  justify-content: center;
}
.track {
  flex: 1;
}
.thumb {
  width: 79%;
  height: 13px;
  display: flex;
  align-items: center;
  justify-content: center;
  border: 1px solid #999;
  border-radius: 2px;
  background: linear-gradient(#f4f4f4, #d0d0d4);
}

/* Graphics window */
.viewport {
  flex: 1;
  min-width: 0;
  border-left: 1px solid #444;
  background: #000099;
}
.viewport svg {
  width: 100%;
  height: 100%;
}
.view-text {
  fill: #d0d0dc;
  font-family: "Noto Sans", sans-serif;
  font-size: 10px;
  font-weight: bold;
}
.axis-name {
  font-size: 9px;
  font-weight: bold;
}

/* Status bar */
.status {
  height: 23px;
  flex: none;
  display: flex;
  align-items: center;
  gap: 5px;
  padding: 0 1px;
  border-top: 1px solid #a4a4a4;
  background: #f0eeee;
  font-family: "Open Sans", "Noto Sans", sans-serif;
  font-size: 10px;
}
.help-text {
  flex: 1;
  white-space: nowrap;
}
.stat {
  height: 17px;
  border: 1px solid #b4b4b8;
  border-radius: 2px;
  background: #f2f2f2;
  line-height: 15px;
  text-align: center;
  white-space: nowrap;
  display: flex;
  justify-content: center;
}
.w9 {
  width: 9px;
}
.w11 {
  width: 11px;
}
.w18 {
  width: 18px;
}
.w30 {
  width: 30px;
}
.w32 {
  width: 32px;
}
.w38 {
  width: 38px;
}
.w44 {
  width: 44px;
}
.w50 {
  width: 50px;
}
.w55 {
  width: 55px;
}
.field {
  display: flex;
  align-items: center;
  height: 17px;
  background: #fff;
}
.field label {
  height: 17px;
  padding: 0 2px 0 5px;
  border: 1px solid #b4b4b8;
  border-right: 0;
  background: #f0f0f0;
  line-height: 15px;
}
#depth {
  width: 45px;
  height: 14px;
  margin-left: 1px;
  background: linear-gradient(#3399ff, #3399ff) 0 0 / 14px 100% no-repeat, #ffff80;
  color: #fff;
}
#level {
  width: 62px;
  padding-left: 3px;
}
.field .drop {
  width: 16px;
}
.swatch {
  width: 25px;
  height: 15px;
  background: #00ff00;
  line-height: 15px;
}
.field.color {
  background: #f0f0f0;
}
.field .big {
  width: 14px;
}
.style-pick {
  height: 17px;
  padding: 0 4px 0 2px;
  display: flex;
  align-items: center;
  justify-content: space-between;
  background: #fff;
}
.stroke {
  width: 33px;
  height: 1px;
  background: #222;
}
.w55 .stroke {
  width: 37px;
}
.stroke.thick {
  height: 2px;
}
.grip {
  margin-left: -7px;
  align-self: flex-end;
}
.glass {
  height: 4px;
  flex: none;
  background: linear-gradient(#7fa4c4, #b4d4f0);
}
.pen {
  position: absolute;
  left: 0;
  top: 0;
  pointer-events: none;
}
.pen path {
  fill: none;
  stroke: #1418e0;
  stroke-width: 2;
}
```
